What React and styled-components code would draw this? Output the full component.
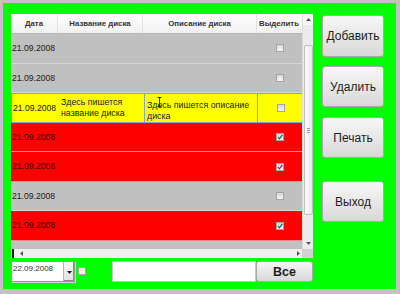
import React from "react";
import styled, { createGlobalStyle } from "styled-components";

const Global = createGlobalStyle`
  html, body { margin: 0; padding: 0; background: #c2c2c2; }
  body { font-family: "Liberation Sans", Arial, sans-serif; }
  * { box-sizing: border-box; }
`;

const Frame = styled.div`
  margin: 3px 0 0 3px;
  width: 393px;
  height: 286px;
  background: #00ff00;
  display: flex;
  padding: 11px 0 0 8px;
`;

const LeftCol = styled.div`
  width: 302px;
  display: flex;
  flex-direction: column;
`;

const Grid = styled.div`
  height: 244px;
  display: flex;
  flex-direction: column;
  background: #c0c0c0;
`;

const GridMain = styled.div`
  height: 235px;
  display: flex;
`;

const Table = styled.div`
  width: 291px;
  overflow: hidden;
  display: flex;
  flex-direction: column;
`;

const cols = "47px 85px 114px 45px";

const Header = styled.div`
  display: grid;
  grid-template-columns: ${cols};
  height: 20px;
  flex: none;
  background: linear-gradient(#ffffff, #f1f1f1);
  border-bottom: 1px solid #b8b8b8;
`;

const HeadCell = styled.div`
  display: flex;
  align-items: center;
  justify-content: center;
  font-size: 7.8px;
  font-weight: bold;
  color: #333;
  white-space: nowrap;
  border-right: 1px solid ${(p) => (p.$last ? "transparent" : "#e2e2e2")};
`;

const Row = styled.div`
  position: relative;
  display: grid;
  grid-template-columns: ${cols};
  height: 29.57px;
  flex: none;
  background: ${(p) => p.$bg};
  border-bottom: 1px solid ${(p) => p.$sep};
  ${(p) => (p.$edit ? "border: 1px solid #84a6c6; border-right: none;" : "")}
`;

const Cell = styled.div`
  display: flex;
  align-items: center;
  justify-content: ${(p) => (p.$center ? "center" : "flex-start")};
  padding-left: ${(p) => (p.$center ? 0 : 1)}px;
  font-size: 8.6px;
  line-height: 10.5px;
  color: ${(p) => p.$color || "#1a1a1a"};
`;

const NameCell = styled(Cell)`
  padding-left: 2px;
  font-size: 8.8px;
`;

const DescCell = styled.div`
  position: relative;
  border: 1px solid #84a6c6;
  border-top: none;
  border-bottom: none;
  padding: 6px 0 0 2px;
  font-size: 8.8px;
  line-height: 10.5px;
  color: #1a1a1a;
`;

const Cursor = styled.svg`
  position: absolute;
  left: 12px;
  top: 3px;
`;

const Box = styled.span`
  position: relative;
  width: 8px;
  height: 8px;
  border: 1px solid #a4a4a4;
  background: linear-gradient(#d8d8d8, #f6f6f6);
  display: inline-flex;
  align-items: center;
  justify-content: center;
`;

const Check = ({ on }) => (
  <Box>
    {on && (
      <svg width="6" height="6" viewBox="0 0 6 6">
        <path d="M0.8 3.2 L2.4 4.8 L5.3 0.9" stroke="#3c4a66" strokeWidth="1.2" fill="none" />
      </svg>
    )}
  </Box>
);

const VScroll = styled.div`
  width: 11px;
  background: #ececec;
  display: flex;
  flex-direction: column;
  align-items: center;
  border-left: 1px solid #dcdcdc;
`;

const Arrow = styled.div`
  height: ${(p) => p.$h}px;
  width: 100%;
  display: flex;
  align-items: center;
  justify-content: center;
  background: ${(p) => p.$bg || "transparent"};
  flex: none;
`;

const Spacer = styled.div`
  height: ${(p) => p.$h}px;
  flex: ${(p) => (p.$grow ? 1 : "none")};
`;

const Thumb = styled.div`
  width: 9px;
  height: 170px;
  flex: none;
  border: 1px solid #bcbcbc;
  border-radius: 2px;
  background: linear-gradient(to right, #fbfbfb, #e8e8e8);
  display: flex;
  align-items: center;
  justify-content: center;
`;

const Grip = styled.div`
  width: 3px;
  height: 5px;
  border-top: 1px solid #999;
  border-bottom: 1px solid #999;
  position: relative;
  &::after {
    content: "";
    position: absolute;
    left: 0;
    right: 0;
    top: 1px;
    border-top: 1px solid #999;
  }
`;

const HScroll = styled.div`
  height: 9px;
  display: flex;
  align-items: center;
  background: #efefef;
`;

const DarkBar = styled.div`
  width: 2px;
  height: 9px;
  margin-left: 1px;
  background: #1c1c1c;
`;

const Corner = styled.div`
  width: 11px;
  height: 9px;
  background: #d2d2d2;
  margin-left: auto;
`;

const Tri = ({ dir }) => {
  const d = {
    up: "M0 3 L2.5 0 L5 3 Z",
    down: "M0 0 L5 0 L2.5 3 Z",
    left: "M3 0 L3 5 L0 2.5 Z",
    right: "M0 0 L3 2.5 L0 5 Z",
  }[dir];
  const vert = dir === "up" || dir === "down";
  return (
    <svg width={vert ? 5 : 3} height={vert ? 3 : 5} viewBox={vert ? "0 0 5 3" : "0 0 3 5"}>
      <path d={d} fill="#555" />
    </svg>
  );
};

const HArrow = styled.div`
  width: 8px;
  display: flex;
  justify-content: center;
  margin-left: ${(p) => p.$ml || 0}px;
`;

const BottomBar = styled.div`
  margin-top: 3px;
  height: 21px;
  display: flex;
  align-items: center;
`;

const DateBox = styled.div`
  width: 64px;
  height: 21px;
  border: 1px solid #9a9a9a;
  background: #fff;
  display: flex;
  box-shadow: 1px 1px 0 #d0d0d0;
`;

const DateText = styled.div`
  flex: 1;
  font-size: 8px;
  color: #333;
  padding: 2px 0 0 1px;
`;

const DropBtn = styled.div`
  width: 11px;
  border-left: 1px solid #b8b8b8;
  background: linear-gradient(#f6f6f6, #e0e0e0);
  display: flex;
  align-items: center;
  justify-content: center;
  padding-top: 2px;
  box-shadow: inset -1px -1px 0 #888;
`;

const SmallBox = styled(Box)`
  margin-left: 3px;
  margin-top: -2px;
  background: linear-gradient(#e2e2e2, #fafafa);
`;

const Input = styled.div`
  margin-left: auto;
  width: 144px;
  height: 21px;
  background: #fff;
  border: 1px solid #c4c4c4;
`;

const Button = styled.div`
  width: ${(p) => p.$w || 62}px;
  height: ${(p) => p.$h || 41}px;
  margin-top: ${(p) => p.$mt || 0}px;
  flex: none;
  display: flex;
  align-items: center;
  justify-content: center;
  background: linear-gradient(#f7f7f7, #e6e6e6 55%, #d8d8d8);
  border: 1px solid #a9a9a9;
  border-radius: 3px;
  font-size: ${(p) => p.$fs || 12}px;
  font-weight: ${(p) => (p.$bold ? "bold" : "normal")};
  color: #1e1e1e;
`;

const RightCol = styled.div`
  margin-left: 9px;
  padding-top: 1px;
  display: flex;
  flex-direction: column;
`;

const rows = [
  { type: "gray", on: false },
  { type: "gray", on: false },
  { type: "yellow", on: false },
  { type: "red", on: true },
  { type: "red", on: true },
  { type: "gray", on: false },
  { type: "red", on: true },
  { type: "gray", on: false, partial: true },
];

const palette = {
  gray: { bg: "#c0c0c0", sep: "#d6d6d6", color: "#1a1a1a" },
  red: { bg: "#ff0000", sep: "#f08a8a", color: "#3a0000" },
  yellow: { bg: "#ffff00", sep: "#84a6c6", color: "#1a1a1a" },
};

export default function App() {
  return (
    <>
      <Global />
      <Frame>
        <LeftCol>
          <Grid>
            <GridMain>
              <Table>
                <Header>
                  <HeadCell>Дата</HeadCell>
                  <HeadCell>Название диска</HeadCell>
                  <HeadCell>Описание диска</HeadCell>
                  <HeadCell $last>Выделить</HeadCell>
                </Header>
                {rows.map((r, i) => {
                  const p = palette[r.type];
                  const edit = r.type === "yellow";
                  return (
                    <Row key={i} $bg={p.bg} $sep={p.sep} $edit={edit}>
                      <Cell $color={p.color}>{r.partial ? "" : "21.09.2008"}</Cell>
                      {edit ? (
                        <>
                          <NameCell>
                            Здесь пишется
                            <br />
                            название диска
                          </NameCell>
                          <DescCell>
                            Здесь пишется описание
                            <br />
                            диска
                            <Cursor width="5" height="10" viewBox="0 0 5 10">
                              <path d="M0.5 0.5 H4.5 M2.5 0.5 V9.5 M0.5 9.5 H4.5" stroke="#222" strokeWidth="0.9" fill="none" />
                            </Cursor>
                          </DescCell>
                        </>
                      ) : (
                        <>
                          <Cell />
                          <Cell />
                        </>
                      )}
                      <Cell $center>{r.partial ? null : <Check on={r.on} />}</Cell>
                    </Row>
                  );
                })}
              </Table>
              <VScroll>
                <Arrow $h={11} $bg="#f7f7f7">
                  <Tri dir="up" />
                </Arrow>
                <Spacer $h={20} />
                <Thumb>
                  <Grip />
                </Thumb>
                <Spacer $grow />
                <Arrow $h={11}>
                  <Tri dir="down" />
                </Arrow>
              </VScroll>
            </GridMain>
            <HScroll>
              <DarkBar />
              <HArrow $ml={3}>
                <Tri dir="left" />
              </HArrow>
              <Spacer $grow />
              <HArrow>
                <Tri dir="right" />
              </HArrow>
              <Corner />
            </HScroll>
          </Grid>
          <BottomBar>
            <DateBox>
              <DateText>22.09.2008</DateText>
              <DropBtn>
                <svg width="5" height="3" viewBox="0 0 5 3">
                  <path d="M0 0 L5 0 L2.5 3 Z" fill="#111" />
                </svg>
              </DropBtn>
            </DateBox>
            <SmallBox />
            <Input />
            <Button $w={57} $h={21} $fs={12.5} $bold>
              Все
            </Button>
          </BottomBar>
        </LeftCol>
        <RightCol>
          <Button $h={42}>Добавить</Button>
          <Button $mt={9}>Удалить</Button>
          <Button $mt={10}>Печать</Button>
          <Button $mt={23}>Выход</Button>
        </RightCol>
      </Frame>
    </>
  );
}
